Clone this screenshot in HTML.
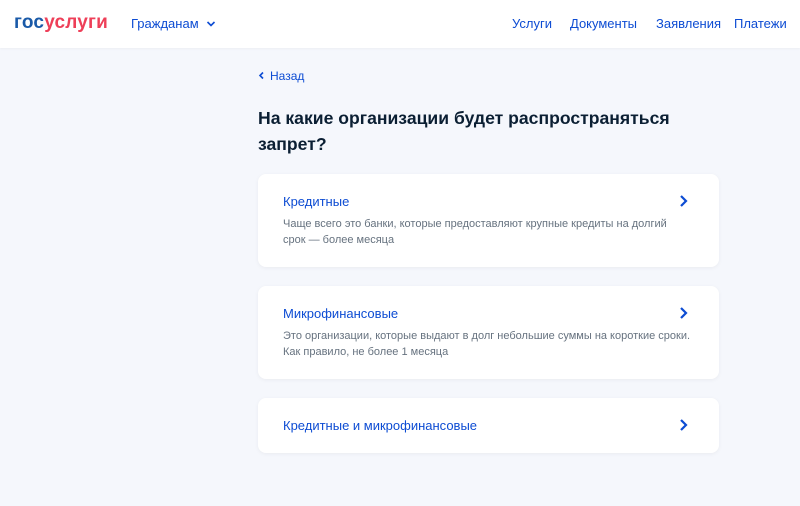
<!DOCTYPE html>
<html><head><meta charset="utf-8"><style>
*{margin:0;padding:0;box-sizing:border-box}
body{width:800px;height:506px;overflow:hidden;background:#f5f7fc;font-family:"Liberation Sans","Noto Sans CJK SC",sans-serif;position:relative}
.hdr{position:absolute;left:0;top:0;width:800px;height:48px;background:#fff;box-shadow:0 1px 2px rgba(0,0,0,.04)}
.logo{position:absolute;left:14px;top:12px;font-size:19px;font-weight:bold;letter-spacing:0.2px}
.logo .a{color:#1a5aa8}.logo .b{color:#ee3f58}
.nav{position:absolute;top:16px;font-size:13px;color:#0d4cd3}
.back{position:absolute;left:258px;top:69px;font-size:12px;color:#0d4cd3}
h1{position:absolute;left:258px;top:105px;width:440px;font-size:17.6px;line-height:26px;color:#0b1f33;font-weight:bold}
.card{position:absolute;left:258px;width:461px;background:#fff;border-radius:8px;box-shadow:0 1px 4px rgba(0,0,0,.05)}
.t{position:absolute;left:25px;font-size:13px;color:#0d4cd3}
.d{position:absolute;left:25px;width:410px;font-size:11px;line-height:15.5px;color:#66727f}
.ch{position:absolute;left:420px}
</style></head><body>
<div class="hdr">
<div class="logo"><span class="a">гос</span><span class="b">услуги</span></div>
<div class="nav" style="left:131px">Гражданам <svg width="10" height="8" viewBox="0 0 10 8" style="margin-left:4px"><path d="M1.5 2l3.5 3.5L8.5 2" stroke="#0d4cd3" stroke-width="1.6" fill="none"/></svg></div>
<div class="nav" style="left:512px">Услуги</div>
<div class="nav" style="left:570px">Документы</div>
<div class="nav" style="left:656px">Заявления</div>
<div class="nav" style="left:734px">Платежи</div>
</div>
<div class="back"><svg width="8" height="9" viewBox="0 0 8 9" style="margin-right:4px"><path d="M5 1.5L2 4.5l3 3" stroke="#0d4cd3" stroke-width="1.6" fill="none"/></svg>Назад</div>
<h1>На какие организации будет распространяться запрет?</h1>
<div class="card" style="top:174px;height:93px">
<div class="t" style="top:20px">Кредитные</div>
<div class="d" style="top:43px">Чаще всего это банки, которые предоставляют крупные кредиты на долгий<br>срок — более месяца</div>
<svg class="ch" style="top:20px" width="12" height="14" viewBox="0 0 12 14"><path d="M3 2l5 5-5 5" stroke="#0d4cd3" stroke-width="2.2" fill="none"/></svg>
</div>
<div class="card" style="top:286px;height:93px">
<div class="t" style="top:20px">Микрофинансовые</div>
<div class="d" style="top:43px;width:430px">Это организации, которые выдают в долг небольшие суммы на короткие сроки.<br>Как правило, не более 1 месяца</div>
<svg class="ch" style="top:20px" width="12" height="14" viewBox="0 0 12 14"><path d="M3 2l5 5-5 5" stroke="#0d4cd3" stroke-width="2.2" fill="none"/></svg>
</div>
<div class="card" style="top:398px;height:55px">
<div class="t" style="top:20px">Кредитные и микрофинансовые</div>
<svg class="ch" style="top:20px" width="12" height="14" viewBox="0 0 12 14"><path d="M3 2l5 5-5 5" stroke="#0d4cd3" stroke-width="2.2" fill="none"/></svg>
</div>
</body></html>
